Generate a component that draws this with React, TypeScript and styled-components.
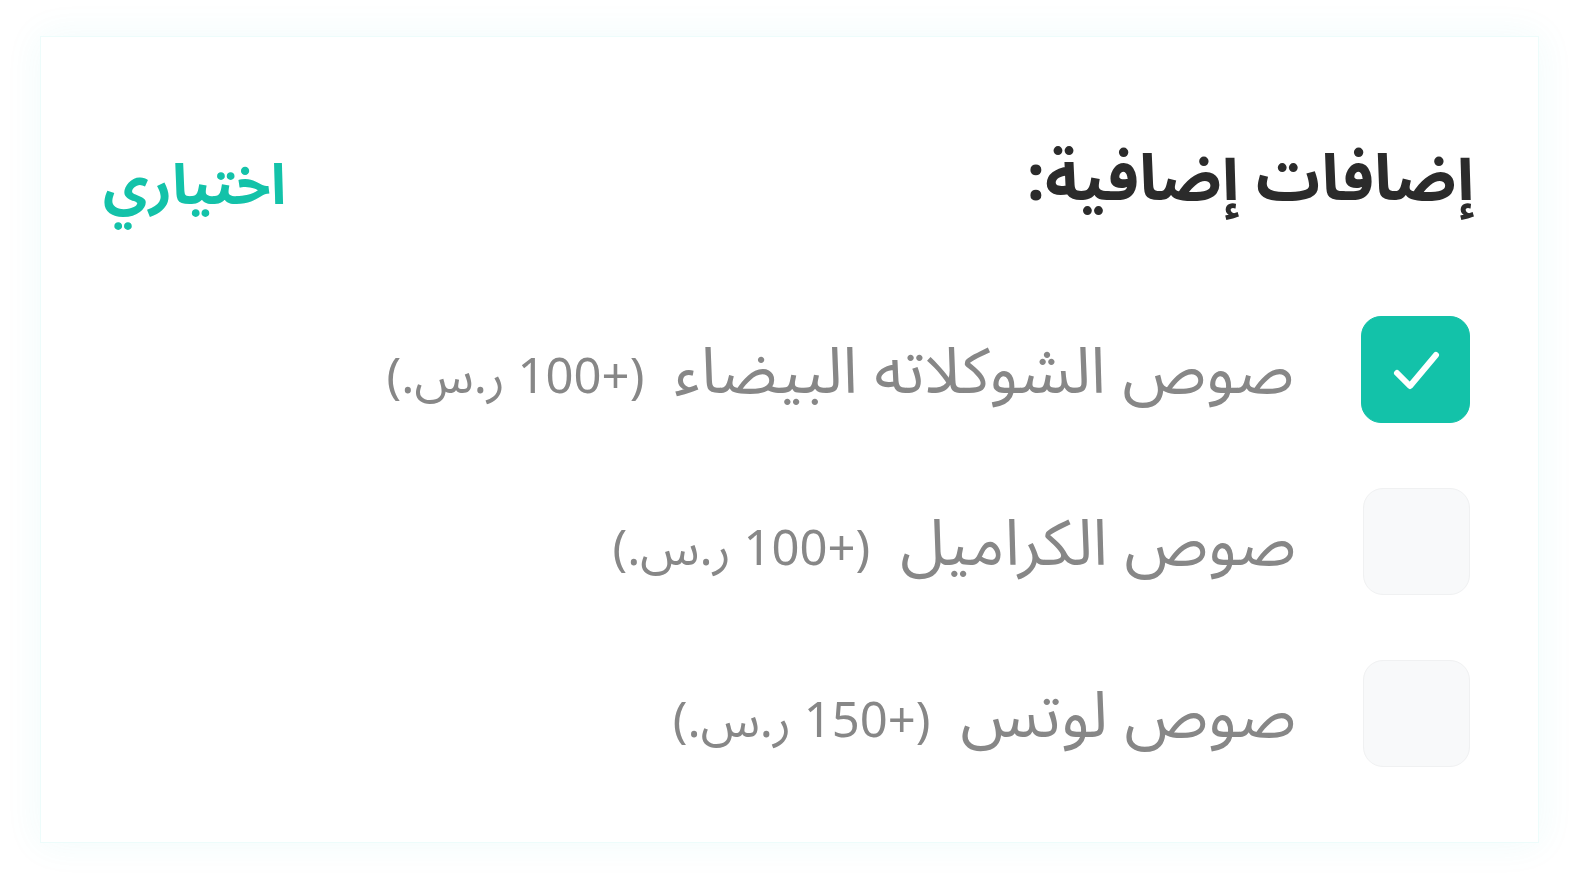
import styled, { createGlobalStyle } from "styled-components";

const GlobalStyle = createGlobalStyle`
  html, body {
    margin: 0;
    padding: 0;
    background: #ffffff;
  }
  body {
    font-family: "Noto Sans Arabic", "Noto Sans", "DejaVu Sans", sans-serif;
  }
`;

const Page = styled.div`
  padding: 36px 41px 45px 40px;
`;

const Card = styled.section`
  direction: rtl;
  height: 807px;
  box-sizing: border-box;
  padding: 92px 68px 0 62px;
  background: #ffffff;
  border: 1px solid rgba(60, 220, 210, 0.09);
  box-shadow: 0 0 36px rgba(40, 200, 200, 0.07);
`;

const Header = styled.div`
  display: flex;
  align-items: center;
  justify-content: space-between;
  height: 100px;
`;

const Title = styled.h2`
  margin: 0 -4px 0 0;
  font-size: 64px;
  font-weight: 700;
  color: #2b2b2b;
`;

const Optional = styled.span`
  font-size: 56px;
  font-weight: 700;
  color: #13c2a9;
  margin-top: 14px;
`;

const List = styled.div`
  display: flex;
  flex-direction: column;
  gap: 65px;
  margin-top: 87px;
`;

const Row = styled.label`
  display: flex;
  align-items: center;
  gap: 67px;
  height: 107px;
`;

const Box = styled.span<{ $checked: boolean }>`
  flex: 0 0 107px;
  height: 107px;
  box-sizing: border-box;
  border-radius: 20px;
  display: flex;
  align-items: center;
  justify-content: center;
  background: ${(p) => (p.$checked ? "#13c2a9" : "#f8f9fa")};
  border: 1.5px solid ${(p) => (p.$checked ? "#13c2a9" : "#f0f1f2")};
`;

const Label = styled.span`
  padding-top: 6px;
`;

const Name = styled.span`
  font-size: 64px;
  color: #878787;
`;

const Price = styled.span`
  font-size: 49px;
  color: #878787;
  margin-right: 30px;
`;

interface IExtra {
  name: string;
  price: number;
  checked: boolean;
}

const extras: IExtra[] = [
  { name: "صوص الشوكلاته البيضاء", price: 100, checked: true },
  { name: "صوص الكراميل", price: 100, checked: false },
  { name: "صوص لوتس", price: 150, checked: false },
];

function Check() {
  return (
    <svg width="107" height="107" viewBox="0 0 107 107" fill="none">
      <path
        d="M35 57 L48 70 L74 39"
        stroke="#ffffff"
        strokeWidth="6"
        strokeLinecap="round"
        strokeLinejoin="round"
      />
    </svg>
  );
}

function App() {
  return (
    <Page>
      <GlobalStyle />
      <Card>
        <Header>
          <Title>إضافات إضافية:</Title>
          <Optional>اختياري</Optional>
        </Header>
        <List>
          {extras.map((extra) => (
            <Row key={extra.name}>
              <Box $checked={extra.checked}>{extra.checked && <Check />}</Box>
              <Label>
                <Name>{extra.name}</Name>
                <Price>(+{extra.price} ر.س.)</Price>
              </Label>
            </Row>
          ))}
        </List>
      </Card>
    </Page>
  );
}

export default App;
